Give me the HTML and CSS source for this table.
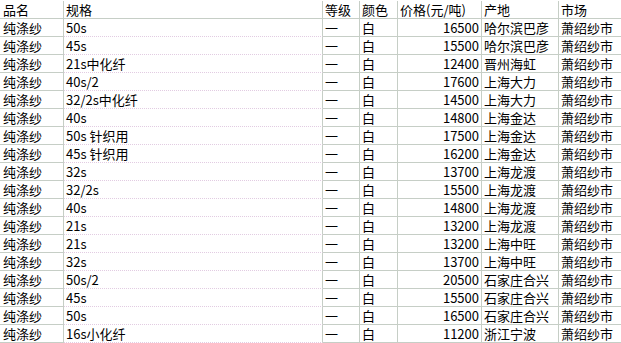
FILE: index.html
```html
<!DOCTYPE html>
<html lang="zh">
<head>
<meta charset="utf-8">
<title>纯涤纱价格</title>
<link rel="stylesheet" href="styles.css">
</head>
<body>
<div class="sheet">
  <div class="row head"><div class="c c1">品名</div><div class="c c2">规格</div><div class="c c3">等级</div><div class="c c4">颜色</div><div class="c c5h">价格(元/吨)</div><div class="c c6">产地</div><div class="c c7">市场</div></div>
  <div class="row"><div class="c c1">纯涤纱</div><div class="c c2">50s</div><div class="c c3">一</div><div class="c c4">白</div><div class="c c5">16500</div><div class="c c6">哈尔滨巴彦</div><div class="c c7">萧绍纱市</div></div>
  <div class="row"><div class="c c1">纯涤纱</div><div class="c c2">45s</div><div class="c c3">一</div><div class="c c4">白</div><div class="c c5">15500</div><div class="c c6">哈尔滨巴彦</div><div class="c c7">萧绍纱市</div></div>
  <div class="row"><div class="c c1">纯涤纱</div><div class="c c2">21s中化纤</div><div class="c c3">一</div><div class="c c4">白</div><div class="c c5">12400</div><div class="c c6">晋州海虹</div><div class="c c7">萧绍纱市</div></div>
  <div class="row"><div class="c c1">纯涤纱</div><div class="c c2">40s/2</div><div class="c c3">一</div><div class="c c4">白</div><div class="c c5">17600</div><div class="c c6">上海大力</div><div class="c c7">萧绍纱市</div></div>
  <div class="row"><div class="c c1">纯涤纱</div><div class="c c2">32/2s中化纤</div><div class="c c3">一</div><div class="c c4">白</div><div class="c c5">14500</div><div class="c c6">上海大力</div><div class="c c7">萧绍纱市</div></div>
  <div class="row"><div class="c c1">纯涤纱</div><div class="c c2">40s</div><div class="c c3">一</div><div class="c c4">白</div><div class="c c5">14800</div><div class="c c6">上海金达</div><div class="c c7">萧绍纱市</div></div>
  <div class="row"><div class="c c1">纯涤纱</div><div class="c c2">50s 针织用</div><div class="c c3">一</div><div class="c c4">白</div><div class="c c5">17500</div><div class="c c6">上海金达</div><div class="c c7">萧绍纱市</div></div>
  <div class="row"><div class="c c1">纯涤纱</div><div class="c c2">45s 针织用</div><div class="c c3">一</div><div class="c c4">白</div><div class="c c5">16200</div><div class="c c6">上海金达</div><div class="c c7">萧绍纱市</div></div>
  <div class="row"><div class="c c1">纯涤纱</div><div class="c c2">32s</div><div class="c c3">一</div><div class="c c4">白</div><div class="c c5">13700</div><div class="c c6">上海龙渡</div><div class="c c7">萧绍纱市</div></div>
  <div class="row"><div class="c c1">纯涤纱</div><div class="c c2">32/2s</div><div class="c c3">一</div><div class="c c4">白</div><div class="c c5">15500</div><div class="c c6">上海龙渡</div><div class="c c7">萧绍纱市</div></div>
  <div class="row"><div class="c c1">纯涤纱</div><div class="c c2">40s</div><div class="c c3">一</div><div class="c c4">白</div><div class="c c5">14800</div><div class="c c6">上海龙渡</div><div class="c c7">萧绍纱市</div></div>
  <div class="row"><div class="c c1">纯涤纱</div><div class="c c2">21s</div><div class="c c3">一</div><div class="c c4">白</div><div class="c c5">13200</div><div class="c c6">上海龙渡</div><div class="c c7">萧绍纱市</div></div>
  <div class="row"><div class="c c1">纯涤纱</div><div class="c c2">21s</div><div class="c c3">一</div><div class="c c4">白</div><div class="c c5">13200</div><div class="c c6">上海中旺</div><div class="c c7">萧绍纱市</div></div>
  <div class="row"><div class="c c1">纯涤纱</div><div class="c c2">32s</div><div class="c c3">一</div><div class="c c4">白</div><div class="c c5">13700</div><div class="c c6">上海中旺</div><div class="c c7">萧绍纱市</div></div>
  <div class="row"><div class="c c1">纯涤纱</div><div class="c c2">50s/2</div><div class="c c3">一</div><div class="c c4">白</div><div class="c c5">20500</div><div class="c c6">石家庄合兴</div><div class="c c7">萧绍纱市</div></div>
  <div class="row"><div class="c c1">纯涤纱</div><div class="c c2">45s</div><div class="c c3">一</div><div class="c c4">白</div><div class="c c5">15500</div><div class="c c6">石家庄合兴</div><div class="c c7">萧绍纱市</div></div>
  <div class="row"><div class="c c1">纯涤纱</div><div class="c c2">50s</div><div class="c c3">一</div><div class="c c4">白</div><div class="c c5">16500</div><div class="c c6">石家庄合兴</div><div class="c c7">萧绍纱市</div></div>
  <div class="row"><div class="c c1">纯涤纱</div><div class="c c2">16s小化纤</div><div class="c c3">一</div><div class="c c4">白</div><div class="c c5">11200</div><div class="c c6">浙江宁波</div><div class="c c7">萧绍纱市</div></div>
</div>
</body>
</html>
```

FILE: styles.css
```css
html, body {
  margin: 0;
  padding: 0;
  background: #ffffff;
}
.sheet {
  width: 621px;
  padding-top: 1px;
  font-family: "Noto Sans CJK SC", "Noto Sans", sans-serif;
  font-size: 13px;
  font-weight: 400;
  color: #000000;
}
.row {
  display: grid;
  grid-template-columns: 64px 259px 37px 38px 84px 77px 62px;
  height: 18px;
}
.c {
  box-sizing: border-box;
  height: 18px;
  line-height: 18px;
  padding: 0 2px;
  border-right: 1px solid #c6cec6;
  border-bottom: 1px solid #c6cec6;
  white-space: nowrap;
  overflow: hidden;
}
.c1 { padding-left: 3px; }
.c5 { text-align: right; }
.c7 { border-right: none; }
.row:not(.head) .c2 { border-bottom: 1px dotted #e2cce2; }
```
